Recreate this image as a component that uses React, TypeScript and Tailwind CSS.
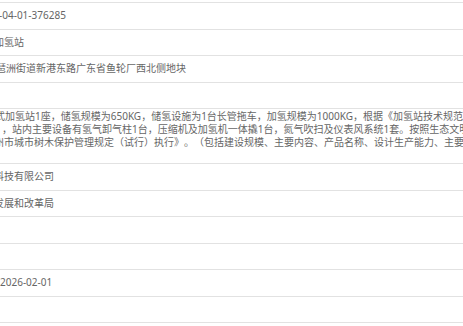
import React from "react";

type Row = {
  lines: { text: string; indent: string }[];
  tall?: boolean;
};

// the value column of a project info table, cropped at both sides
const rows: Row[] = [
  { lines: [{ text: "-04-01-376285", indent: "-ml-[1px]" }] },
  { lines: [{ text: "加氢站", indent: "-ml-[6px]" }] },
  { lines: [{ text: "琶洲街道新港东路广东省鱼轮厂西北侧地块", indent: "-ml-[4px]" }] },
  { lines: [] },
  {
    tall: true,
    lines: [
      {
        text: "式加氢站1座，储氢规模为650KG，储氢设施为1台长管拖车，加氢规模为1000KG，根据《加氢站技术规范》",
        indent: "-ml-[5px]",
      },
      {
        text: "，站内主要设备有氢气卸气柱1台，压缩机及加氢机一体撬1台，氮气吹扫及仪表风系统1套。按照生态文明建设",
        indent: "ml-[2px]",
      },
      {
        text: "州市城市树木保护管理规定（试行）执行》。（包括建设规模、主要内容、产品名称、设计生产能力、主要设备",
        indent: "-ml-[6px]",
      },
    ],
  },
  { lines: [{ text: "科技有限公司", indent: "-ml-[6px]" }] },
  { lines: [{ text: "发展和改革局", indent: "-ml-[6px]" }] },
  { lines: [] },
  { lines: [] },
  { lines: [{ text: "2026-02-01", indent: "ml-0" }] },
  { lines: [] },
  { lines: [] },
];

export default function App() {
  return (
    <div
      className="w-[463px] h-[326px] overflow-hidden bg-white pt-[2px] text-[10px] text-[#666666] [text-spacing-trim:space-all]"
      style={{ fontFamily: '"Noto Sans", "Noto Sans CJK SC", sans-serif' }}
    >
      {rows.map((row, i) =>
        row.tall ? (
          <div
            key={i}
            className="h-[55px] border-t border-[#e2e2e2] pt-[1px] overflow-hidden whitespace-nowrap"
          >
            {row.lines.map((line, j) => (
              <div key={j} className={`leading-[13px] ${line.indent}`}>
                {line.text}
              </div>
            ))}
          </div>
        ) : (
          <div
            key={i}
            className="h-[26.5px] border-t border-[#e2e2e2] flex items-center overflow-hidden whitespace-nowrap"
          >
            {row.lines.map((line, j) => (
              <span key={j} className={`leading-[13px] ${line.indent}`}>
                {line.text}
              </span>
            ))}
          </div>
        )
      )}
    </div>
  );
}
